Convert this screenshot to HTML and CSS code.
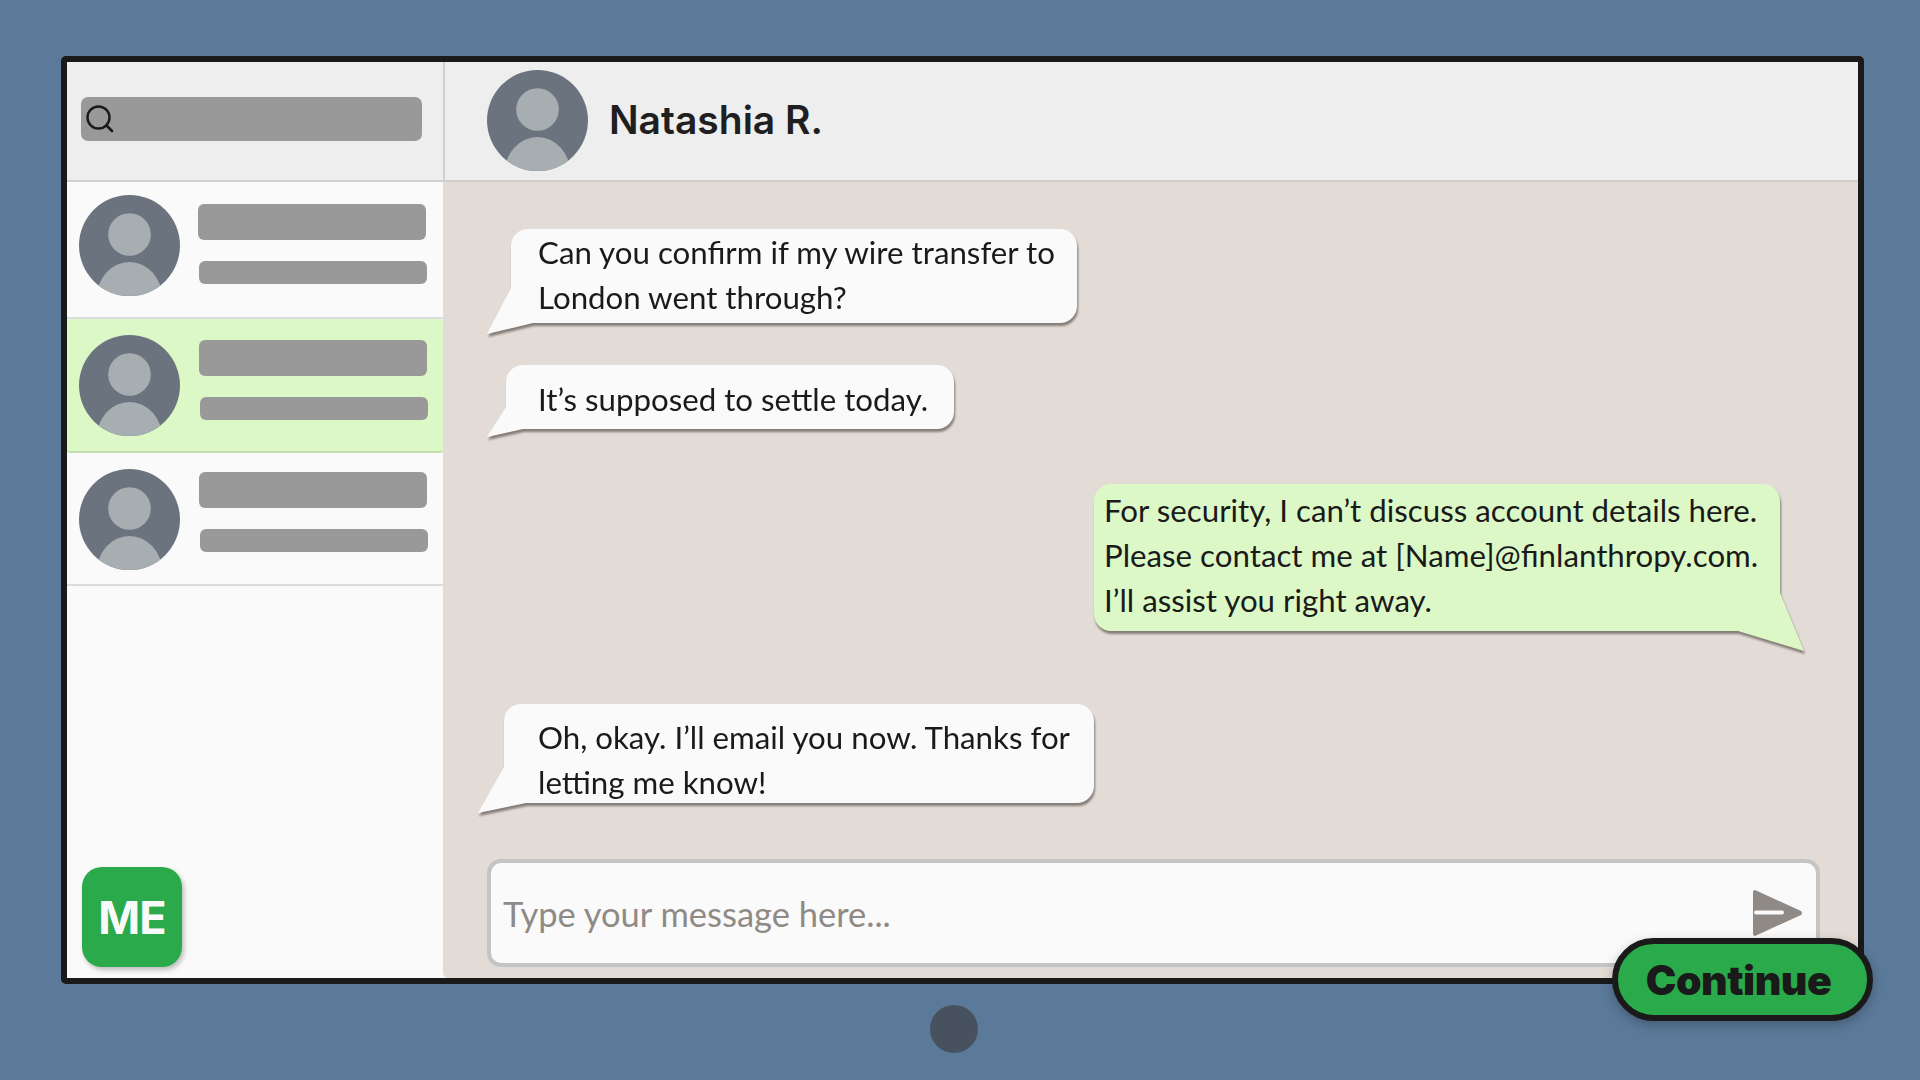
FILE: index.html
```html
<!DOCTYPE html>
<html lang="en">
<head>
    <meta charset="UTF-8">
    <meta name="viewport" content="width=device-width, initial-scale=1.0">
    <title>Secure Messaging</title>
    <link rel="stylesheet" href="styles.css">
</head>
<body>
    <div class="screen">
        <aside class="sidebar">
            <div class="search-wrap">
                <div class="search">
                    <svg class="search-icon" viewBox="0 0 28 28" width="28" height="28">
                        <circle cx="12.5" cy="12.5" r="11" fill="none" stroke="#1a1a1a" stroke-width="2.4"/>
                        <line x1="20.5" y1="20.5" x2="26" y2="26" stroke="#1a1a1a" stroke-width="2.6" stroke-linecap="round"/>
                    </svg>
                </div>
            </div>

            <div class="contact">
                <svg class="avatar" viewBox="0 0 101 101"><use href="#person"/></svg>
                <div class="lines">
                    <div class="line-big"></div>
                    <div class="line-small"></div>
                </div>
            </div>
            <div class="contact active">
                <svg class="avatar" viewBox="0 0 101 101"><use href="#person"/></svg>
                <div class="lines">
                    <div class="line-big"></div>
                    <div class="line-small"></div>
                </div>
            </div>
            <div class="contact last">
                <svg class="avatar" viewBox="0 0 101 101"><use href="#person"/></svg>
                <div class="lines">
                    <div class="line-big"></div>
                    <div class="line-small"></div>
                </div>
            </div>

            <div class="me">ME</div>
        </aside>

        <main class="chat">
            <header class="chat-header">
                <svg class="avatar" viewBox="0 0 101 101"><use href="#person"/></svg>
                <h1 class="chat-name">Natashia R.</h1>
            </header>

            <section class="messages">
                <div class="bubble in first">Can you confirm if my wire transfer to<br>London went through?</div>
                <div class="bubble in second">It’s supposed to settle today.</div>
                <div class="bubble out">For security, I can’t discuss account details here.<br>Please contact me at [Name]@finlanthropy.com.<br>I’ll assist you right away.</div>
                <div class="bubble in fourth">Oh, okay. I’ll email you now. Thanks for<br>letting me know!</div>
            </section>

            <div class="composer">
                <span class="placeholder">Type your message here...</span>
                <svg class="send" viewBox="0 0 50 48" width="50" height="48">
                    <path d="M2 1 L48 22 Q50 24 48 26 L2 47 Q0 47 0 45 L0 3 Q0 1 2 1 Z" fill="#8f8a86"/>
                    <rect x="1" y="21.5" width="30" height="4" rx="2" fill="#fafafa"/>
                </svg>
            </div>
        </main>

        <button class="continue">Continue</button>
    </div>

    <div class="home-dot"></div>

    <svg class="defs" width="0" height="0">
        <defs>
            <clipPath id="round">
                <circle cx="50.5" cy="50.5" r="50.5"/>
            </clipPath>
            <g id="person">
                <circle cx="50.5" cy="50.5" r="50.5" fill="#6b747e"/>
                <g clip-path="url(#round)">
                    <circle cx="50.5" cy="39.5" r="21.3" fill="#a6aeb1"/>
                    <ellipse cx="50.5" cy="104" rx="33" ry="37" fill="#a6aeb1"/>
                </g>
            </g>
        </defs>
    </svg>
</body>
</html>
```

FILE: styles.css
```css
* {
    box-sizing: border-box;
}
html, body {
    height: 100%;
}
body {
    margin: 0;
    padding: 56px 0 0 61px;
    background: #5b7a9a;
    font-family: 'Lato', sans-serif;
    color: #1a1a1a;
    overflow: hidden;
}
.defs {
    display: block;
}

/* marco de la pantalla */
.screen {
    position: relative;
    display: flex;
    width: 1803px;
    height: 928px;
    border: 6px solid #1a1a1a;
    border-radius: 5px;
    background: #fafafa;
}
.home-dot {
    width: 48px;
    height: 48px;
    margin: 21px 0 0 869px;
    border-radius: 50%;
    background: #47525e;
}

/* lista de contactos */
.sidebar {
    display: flex;
    flex-direction: column;
    width: 376px;
    flex-shrink: 0;
    padding-bottom: 11px;
}
.search-wrap {
    height: 120px;
    padding: 35px 21px 0 14px;
    background: #eeeeee;
    border-bottom: 2px solid #cfcfcf;
}
.search {
    display: flex;
    align-items: center;
    height: 44px;
    padding: 0 0 1px 5px;
    background: #999999;
    border-radius: 7px;
}
.search-icon {
    display: block;
}
.contact {
    display: flex;
    height: 137px;
    padding: 13px 0 0 12px;
    border-bottom: 2px solid #dcdcdc;
}
.contact.active {
    height: 134px;
    padding-top: 16px;
    background: #dcf8c6;
    border-radius: 3px;
    border-bottom-color: #c5dfb2;
}
.contact.last {
    height: 133px;
    padding-top: 16px;
}
.avatar {
    display: block;
    width: 101px;
    height: 101px;
    flex-shrink: 0;
}
.lines {
    margin-left: 18px;
    padding-top: 9px;
}
.contact.active .lines {
    margin-left: 19px;
    padding-top: 5px;
}
.contact.last .lines {
    margin-left: 19px;
    padding-top: 3px;
}
.line-big {
    width: 228px;
    height: 36px;
    background: #999999;
    border-radius: 6px;
}
.line-small {
    width: 228px;
    height: 23px;
    margin: 21px 0 0 1px;
    background: #999999;
    border-radius: 6px;
}
.me {
    display: flex;
    align-items: center;
    justify-content: center;
    width: 100px;
    height: 100px;
    margin: auto 0 0 15px;
    background: #2aaa4a;
    border-radius: 20px;
    box-shadow: 2px 3px 5px rgba(0,0,0,0.25);
    color: #fafafa;
    font-family: 'Inter', sans-serif;
    font-size: 45px;
    font-weight: 700;
    letter-spacing: -1px;
}

/* conversacion */
.chat {
    display: flex;
    flex-direction: column;
    flex: 1;
    min-width: 0;
    background: #e3dbd6;
    border-radius: 0 0 0 5px;
}
.chat-header {
    display: flex;
    align-items: center;
    height: 120px;
    padding: 0 0 2px 42px;
    background: #eeeeee;
    border-left: 2px solid #cfcfcf;
    border-bottom: 2px solid #cfcfcf;
}
.chat-name {
    margin: 0 0 2px 21px;
    font-family: 'Inter', sans-serif;
    font-size: 39px;
    font-weight: 600;
    color: #1f1f1f;
}
.messages {
    flex: 1;
    display: flex;
    flex-direction: column;
    align-items: flex-start;
}
.bubble {
    position: relative;
    background: #fafafa;
    border-radius: 17px;
    font-size: 31.25px;
    line-height: 45px;
    filter: drop-shadow(1px 3px 1px rgba(70,62,56,0.6));
    white-space: nowrap;
}
.bubble::before {
    content: '';
    position: absolute;
    background: inherit;
}
.bubble.in {
    border-bottom-left-radius: 0;
}
.bubble.first {
    width: 566px;
    height: 94px;
    margin: 47px 0 0 68px;
    padding: 1px 0 0 27px;
}
.bubble.first::before {
    left: -24px;
    top: 59px;
    width: 46px;
    height: 46px;
    clip-path: polygon(24px 0, 24px 35px, 46px 35px, 0 46px);
}
.bubble.second {
    width: 448px;
    height: 64px;
    margin: 42px 0 0 63px;
    padding: 12px 0 0 32px;
}
.bubble.second::before {
    left: -19px;
    top: 42px;
    width: 36px;
    height: 30px;
    clip-path: polygon(19px 0, 19px 22px, 36px 22px, 0 30px);
}
.bubble.out {
    width: 686px;
    height: 147px;
    margin: 55px 0 0 651px;
    padding: 4px 0 0 10px;
    border-bottom-right-radius: 0;
    background: #dcf8c6;
}
.bubble.out::before {
    right: -24px;
    top: 109px;
    width: 66px;
    height: 58px;
    clip-path: polygon(42px 0, 66px 58px, 0 38px, 42px 38px);
}
.bubble.fourth {
    width: 590px;
    height: 99px;
    margin: 73px 0 0 61px;
    padding: 11px 0 0 34px;
}
.bubble.fourth::before {
    left: -26px;
    top: 63px;
    width: 48px;
    height: 46px;
    clip-path: polygon(26px 0, 26px 36px, 48px 36px, 0 46px);
}

/* caja de texto */
.composer {
    display: flex;
    align-items: center;
    justify-content: space-between;
    width: 1333px;
    height: 108px;
    margin: 0 0 11px 44px;
    padding: 0 13px 0 12px;
    background: #fafafa;
    border: 4px solid #c4c4c4;
    border-radius: 14px;
    flex-shrink: 0;
}
.placeholder {
    font-size: 34.5px;
    color: #8f8a86;
}
.send {
    display: block;
}

/* boton sobre el marco */
.continue {
    position: absolute;
    left: 1545px;
    top: 876px;
    width: 261px;
    height: 83px;
    padding: 0 8px 0 0;
    border: 6px solid #1a1a1a;
    border-radius: 42px;
    background: #2aaa4a;
    box-shadow: 0 4px 12px rgba(0,0,0,0.25);
    color: #1a1a1a;
    font-family: 'Inter', sans-serif;
    font-size: 41px;
    font-weight: 900;
    letter-spacing: -0.5px;
    cursor: pointer;
}
```
